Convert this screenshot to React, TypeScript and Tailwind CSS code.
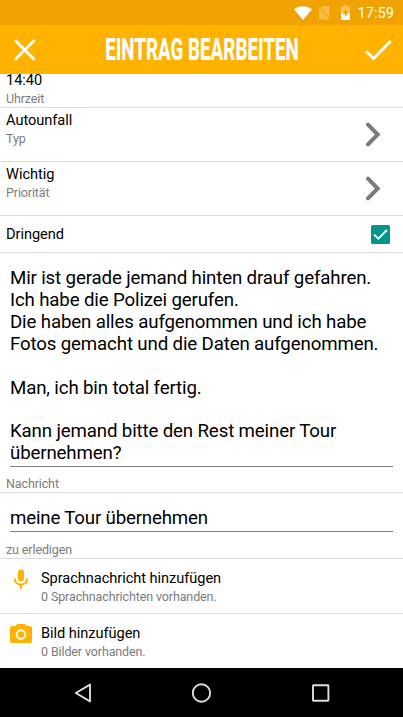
import type { ReactNode } from "react";

const MESSAGE = `Mir ist gerade jemand hinten drauf gefahren.
Ich habe die Polizei gerufen.
Die haben alles aufgenommen und ich habe
Fotos gemacht und die Daten aufgenommen.

Man, ich bin total fertig.

Kann jemand bitte den Rest meiner Tour übernehmen?`;

const StatusBar = () => (
  <div className="flex h-[25px] items-center justify-end bg-[#f0a300] pr-[9px] text-white">
    <svg className="mr-[6px] h-[14px] w-[18px]" viewBox="0 0 18 14" fill="currentColor">
      <path d="M0 3.2C5-.9 13-.9 18 3.2L9 14Z" />
    </svg>
    <svg className="mr-[10px] h-[14px] w-[13px]" viewBox="0 0 13 14">
      <path d="M4 0H11.5V11L2.8 2ZM1 3.2L10.8 13.6H1Z" fill="#fff" opacity="0.3" />
      <path d="M.4 1.3L12.3 13.5" stroke="#fff" strokeWidth="1" opacity="0.4" />
    </svg>
    <svg className="mr-[7px] h-[15px] w-[9px]" viewBox="0 0 9 15">
      <path d="M2.5 0H6.5V1.5H9V8H0V1.5H2.5Z" fill="#fff" opacity="0.35" />
      <path d="M0 8H9V15H0Z" fill="#fff" />
      <path d="M5.3 3L1.6 8.8H4V12.6L7.5 7H5.3Z" fill="#f0a300" />
    </svg>
    <span className="pt-px text-[14.7px] leading-[24px]">17:59</span>
  </div>
);

const Header = () => (
  <header className="flex h-[49px] items-center justify-between bg-[#ffb300] pr-[11px] pl-[14px] text-white">
    <button aria-label="Schließen">
      <svg className="h-[22px] w-[22px]" viewBox="0 0 22 22" fill="none" stroke="currentColor" strokeWidth="2.8">
        <path d="M1 1.3L20.5 20.8M20.5 1.3L1 20.8" />
      </svg>
    </button>
    <h1 className="flex w-[194px] justify-center whitespace-nowrap pt-px pl-[2px] text-[31px] leading-[48px] font-extrabold">
      <span className="inline-block shrink-0 scale-x-[0.605]">EINTRAG BEARBEITEN</span>
    </h1>
    <button aria-label="Speichern">
      <svg className="h-[22px] w-[27px]" viewBox="0 0 27 22" fill="none" stroke="currentColor" strokeWidth="2.8">
        <path d="M1 12.2L8.6 19.5L25.8 2" />
      </svg>
    </button>
  </header>
);

const Chevron = () => (
  <svg
    className="mt-[14px] h-[25px] w-[16px]"
    viewBox="0 0 16 25"
    fill="none"
    stroke="#7a7a7a"
    strokeWidth="4"
    strokeLinecap="round"
  >
    <path d="M3 2.6L12.7 12.5L3 22.4" />
  </svg>
);

interface SelectRowProps {
  value: string;
  label: string;
}

const SelectRow = ({ value, label }: SelectRowProps) => (
  <div className="flex h-[54px] justify-between border-b border-[#dedede] pr-[22px] pl-[6px]">
    <div className="pt-[3px]">
      <p className="text-[14.6px] leading-[19px] tracking-[-0.05px]">{value}</p>
      <p className="text-[12.5px] leading-[18px] tracking-[-0.12px] text-[#7c7c7c]">{label}</p>
    </div>
    <Chevron />
  </div>
);

interface AddRowProps {
  icon: ReactNode;
  title: string;
  info: string;
}

const AddRow = ({ icon, title, info }: AddRowProps) => (
  <div className="flex h-[55px] border-b border-[#dedede] last:border-b-0">
    <div className="flex w-[41px] justify-center pt-[10px]">{icon}</div>
    <div className="pt-[10px]">
      <p className="text-[14.6px] leading-[19px] tracking-[-0.05px]">{title}</p>
      <p className="text-[12.5px] leading-[18px] tracking-[-0.12px] text-[#7c7c7c]">{info}</p>
    </div>
  </div>
);

const MicIcon = () => (
  <svg className="h-[22px] w-[16px]" viewBox="0 0 16 22" fill="none" stroke="#ffb300">
    <path d="M8 3.6V9.4" strokeWidth="6" strokeLinecap="round" />
    <path d="M1.8 9.5C1.8 17.6 14.2 17.6 14.2 9.5M8 15.5V19.7" strokeWidth="2.1" />
  </svg>
);

const CameraIcon = () => (
  <svg className="h-[20px] w-[22px]" viewBox="0 0 22 20">
    <path d="M7.2 0H14.8L16.6 2H20A2 2 0 0 1 22 4V17A2 2 0 0 1 20 19H2A2 2 0 0 1 0 17V4A2 2 0 0 1 2 2H5.4Z" fill="#ffb300" />
    <circle cx="11" cy="10.5" r="4.3" fill="none" stroke="#fff" strokeWidth="1.9" />
  </svg>
);

const NavBar = () => (
  <nav className="flex h-[49px] items-center justify-between bg-black pr-[73px] pl-[74px]">
    <svg className="h-[20px] w-[18px]" viewBox="0 0 18 20" fill="none" stroke="#dedede" strokeWidth="1.9">
      <path d="M1.8 10L16 1.6V18.4Z" strokeLinejoin="round" />
    </svg>
    <svg className="h-[20px] w-[20px]" viewBox="0 0 20 20" fill="none" stroke="#dedede" strokeWidth="1.9">
      <circle cx="9.5" cy="10" r="8.7" />
    </svg>
    <svg className="h-[18px] w-[18px]" viewBox="0 0 18 18" fill="none" stroke="#dedede" strokeWidth="1.9">
      <rect x="1" y="1.3" width="15.4" height="15.4" rx="0.5" />
    </svg>
  </nav>
);

export default function App() {
  return (
    <div className="flex h-[717px] w-[403px] flex-col overflow-hidden bg-white font-['Roboto',sans-serif] text-black">
      <StatusBar />
      <Header />

      <main className="h-[594px]">
        <div className="h-[34px] border-b border-[#dedede] pl-[6px]">
          <p className="text-[14.6px] leading-[13px] tracking-[-0.05px]">14:40</p>
          <p className="pt-[3px] text-[12.5px] leading-[18px] tracking-[-0.12px] text-[#7c7c7c]">Uhrzeit</p>
        </div>

        <SelectRow value="Autounfall" label="Typ" />
        <SelectRow value="Wichtig" label="Priorität" />

        <div className="flex h-[37px] items-center justify-between border-b border-[#dedede] pr-[13px] pl-[6px]">
          <span className="pt-[2px] text-[14.6px] tracking-[-0.05px]">Dringend</span>
          <svg className="h-[19px] w-[19px]" viewBox="0 0 19 19" fill="none">
            <rect width="19" height="19" rx="1.5" fill="#009688" />
            <path d="M3 9.5L7.3 13.7L16 5" stroke="#fff" strokeWidth="1.9" />
          </svg>
        </div>

        {/* Message field */}
        <div className="h-[240px] border-b border-[#dedede]">
          <p className="mx-[10px] h-[214px] whitespace-pre-wrap border-b border-[#808080] pt-[15px] text-[18.7px] leading-[21.9px] tracking-[-0.15px]">
            {MESSAGE}
          </p>
          <p className="pt-[8px] pl-[6px] text-[12.5px] leading-[18px] tracking-[-0.12px] text-[#7c7c7c]">Nachricht</p>
        </div>

        <div className="h-[66px] border-b border-[#dedede]">
          <p className="mx-[10px] h-[39px] border-b border-[#808080] pt-[14px] text-[18.7px] leading-[22px] tracking-[-0.18px]">
            meine Tour übernehmen
          </p>
          <p className="pt-[9px] pl-[6px] text-[12.5px] leading-[18px] tracking-[-0.12px] text-[#7c7c7c]">zu erledigen</p>
        </div>

        <AddRow icon={<MicIcon />} title="Sprachnachricht hinzufügen" info="0 Sprachnachrichten vorhanden." />
        <AddRow icon={<CameraIcon />} title="Bild hinzufügen" info="0 Bilder vorhanden." />
      </main>

      <NavBar />
    </div>
  );
}
